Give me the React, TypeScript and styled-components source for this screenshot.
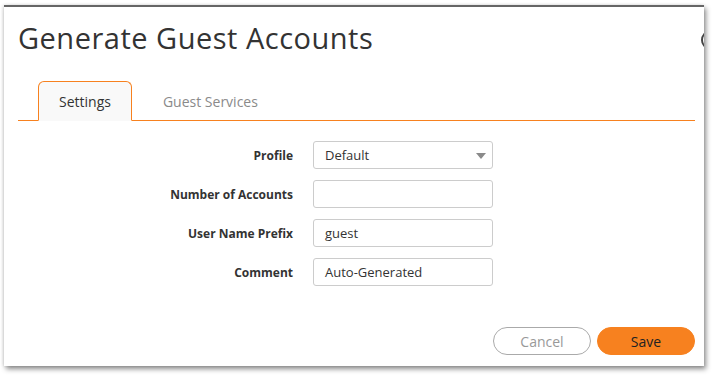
import React from 'react';
import styled, { createGlobalStyle } from 'styled-components';

const GlobalStyle = createGlobalStyle`
  body {
    margin: 0;
    background: #ffffff;
    font-family: "Open Sans", "Liberation Sans", sans-serif;
  }
`;

const ORANGE = '#f7811f';

const Page = styled.div`
  padding: 5px 9px 9px 4px;
`;

const Dialog = styled.div`
  position: relative;
  width: 700px;
  height: 361px;
  box-sizing: border-box;
  background: #ffffff;
  border-top: 2px solid #666666;
  box-shadow: 2px 3px 5px rgba(0, 0, 0, 0.45), -1px 0 3px rgba(0, 0, 0, 0.12);
  padding: 11px 9px 11px 14px;
  display: flex;
  flex-direction: column;
  overflow: hidden;
`;

const CloseEdge = styled.span`
  position: absolute;
  right: -13px;
  top: 24px;
  width: 12px;
  height: 14px;
  border-radius: 50%;
  border: 2px solid #444444;
`;

const Title = styled.h1`
  margin: 0;
  font-size: 29px;
  letter-spacing: 0.5px;
  font-weight: 400;
  color: #333333;
  line-height: 40px;
`;

const TabBar = styled.div`
  margin-top: 23px;
  display: flex;
  gap: 10px;
  padding-left: 20px;
  border-bottom: 1px solid ${ORANGE};
`;

const Tab = styled.div<{ $active?: boolean }>`
  height: 38px;
  padding: 0 20px;
  display: flex;
  align-items: center;
  font-size: 14px;
  color: ${(p) => (p.$active ? '#333333' : '#8a8a8a')};
  background: ${(p) => (p.$active ? '#f9f9f9' : 'transparent')};
  border: 1px solid ${(p) => (p.$active ? ORANGE : 'transparent')};
  border-bottom: none;
  border-radius: 6px 6px 0 0;
  margin-bottom: -1px;
  ${(p) => p.$active && `border-bottom: 1px solid #f9f9f9;`}
`;

const Form = styled.div`
  margin-top: 20px;
  display: grid;
  grid-template-columns: 275px 180px;
  column-gap: 20px;
  row-gap: 11px;
  align-items: center;
`;

const Label = styled.label`
  text-align: right;
  font-size: 12px;
  font-weight: 700;
  color: #333333;
`;

const Field = styled.div`
  position: relative;
  height: 28px;
  box-sizing: border-box;
  border: 1px solid #cccccc;
  border-radius: 3px;
  background: #ffffff;
  display: flex;
  align-items: center;
  padding: 0 11px;
  font-size: 13px;
  color: #333333;
`;

const Caret = styled.span`
  position: absolute;
  right: 6px;
  top: 11px;
  width: 0;
  height: 0;
  border-left: 5px solid transparent;
  border-right: 5px solid transparent;
  border-top: 6px solid #8a8a8a;
`;

const Footer = styled.div`
  margin-top: auto;
  display: flex;
  justify-content: flex-end;
  gap: 6px;
`;

const Button = styled.button<{ $primary?: boolean }>`
  width: 98px;
  height: 28px;
  border-radius: 14px;
  font-family: inherit;
  font-size: 14px;
  cursor: pointer;
  border: 1px solid ${(p) => (p.$primary ? ORANGE : '#aaaaaa')};
  background: ${(p) => (p.$primary ? ORANGE : '#ffffff')};
  color: ${(p) => (p.$primary ? '#222222' : '#999999')};
`;

const rows = [
  { label: 'Profile', value: 'Default', select: true },
  { label: 'Number of Accounts', value: '' },
  { label: 'User Name Prefix', value: 'guest' },
  { label: 'Comment', value: 'Auto-Generated' },
];

const App: React.FC = () => {
  return (
    <Page>
      <GlobalStyle />
      <Dialog>
        <CloseEdge />
        <Title>Generate Guest Accounts</Title>
        <TabBar>
          <Tab $active>Settings</Tab>
          <Tab>Guest Services</Tab>
        </TabBar>
        <Form>
          {rows.map((r) => (
            <React.Fragment key={r.label}>
              <Label>{r.label}</Label>
              <Field>
                {r.value}
                {r.select && <Caret />}
              </Field>
            </React.Fragment>
          ))}
        </Form>
        <Footer>
          <Button>Cancel</Button>
          <Button $primary>Save</Button>
        </Footer>
      </Dialog>
    </Page>
  );
};

export default App;
